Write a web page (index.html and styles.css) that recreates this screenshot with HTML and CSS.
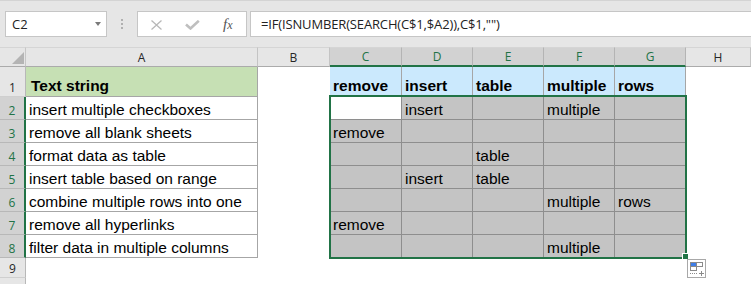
FILE: index.html
```html
<!DOCTYPE html>
<html>
<head>
<meta charset="utf-8">
<link rel="stylesheet" href="styles.css">
</head>
<body>
<div class="toolbar">
  <div class="namebox"><span>C2</span><span class="caret"></span></div>
  <div class="grip"><i></i><i></i><i></i></div>
  <div class="fbtns">
    <svg class="ico-x" width="11" height="10" viewBox="0 0 11 10"><path d="M0.5 0.5 L10.5 9.5 M10.5 0.5 L0.5 9.5" stroke="#b8b8b8" stroke-width="1.3" fill="none"/></svg>
    <svg class="ico-ok" width="15" height="10" viewBox="0 0 15 10"><polyline points="1,4.5 5.5,8.5 13.8,0.8" stroke="#bfbfbf" stroke-width="2.6" fill="none"/></svg>
    <span class="fx"><span class="f">f</span><span class="x">x</span></span>
  </div>
  <div class="formula">=IF(ISNUMBER(SEARCH(C$1,$A2)),C$1,"")</div>
</div>
<div class="sheet">
  <div class="corner"><span class="tri"></span></div>
  <div class="ch">A</div><div class="ch">B</div><div class="ch sel">C</div><div class="ch sel">D</div><div class="ch sel">E</div><div class="ch sel">F</div><div class="ch sel">G</div><div class="ch">H</div>

  <div class="rh">1</div>
  <div class="c a a1">Text string</div><div class="c b"></div>
  <div class="c hd">remove</div><div class="c hd">insert</div><div class="c hd">table</div><div class="c hd">multiple</div><div class="c hd">rows</div><div class="c h"></div>

  <div class="rh sel">2</div>
  <div class="c a">insert multiple checkboxes</div><div class="c b"></div>
  <div class="c g w"></div><div class="c g">insert</div><div class="c g"></div><div class="c g">multiple</div><div class="c g"></div><div class="c h"></div>

  <div class="rh sel">3</div>
  <div class="c a">remove all blank sheets</div><div class="c b"></div>
  <div class="c g">remove</div><div class="c g"></div><div class="c g"></div><div class="c g"></div><div class="c g"></div><div class="c h"></div>

  <div class="rh sel">4</div>
  <div class="c a">format data as table</div><div class="c b"></div>
  <div class="c g"></div><div class="c g"></div><div class="c g">table</div><div class="c g"></div><div class="c g"></div><div class="c h"></div>

  <div class="rh sel">5</div>
  <div class="c a">insert table based on range</div><div class="c b"></div>
  <div class="c g"></div><div class="c g">insert</div><div class="c g">table</div><div class="c g"></div><div class="c g"></div><div class="c h"></div>

  <div class="rh sel">6</div>
  <div class="c a">combine multiple rows into one</div><div class="c b"></div>
  <div class="c g"></div><div class="c g"></div><div class="c g"></div><div class="c g">multiple</div><div class="c g">rows</div><div class="c h"></div>

  <div class="rh sel">7</div>
  <div class="c a">remove all hyperlinks</div><div class="c b"></div>
  <div class="c g">remove</div><div class="c g"></div><div class="c g"></div><div class="c g"></div><div class="c g"></div><div class="c h"></div>

  <div class="rh sel">8</div>
  <div class="c a">filter data in multiple columns</div><div class="c b"></div>
  <div class="c g"></div><div class="c g"></div><div class="c g"></div><div class="c g">multiple</div><div class="c g"></div><div class="c h"></div>

  <div class="rh">9</div>
  <div class="c"></div><div class="c"></div><div class="c"></div><div class="c"></div><div class="c"></div><div class="c"></div><div class="c"></div><div class="c"></div>

  <div class="rh"></div>
  <div class="c"></div><div class="c"></div><div class="c"></div><div class="c"></div><div class="c"></div><div class="c"></div><div class="c"></div><div class="c"></div>
</div>

<div class="selection"></div>
<div class="handle"></div>
<div class="paste">
  <svg width="17" height="17" viewBox="0 0 17 17">
    <rect x="2.5" y="2.5" width="6" height="4" fill="#3f7ee8" stroke="#8a8a8a" stroke-width="1"/>
    <rect x="8.5" y="2.5" width="6" height="4" fill="#fff" stroke="#8a8a8a" stroke-width="1"/>
    <rect x="2.5" y="6.5" width="6" height="4" fill="none" stroke="#8a8a8a" stroke-width="1"/>
    <rect x="2" y="13" width="1" height="1" fill="#8a8a8a"/>
    <rect x="4" y="13" width="1" height="1" fill="#8a8a8a"/>
    <rect x="6" y="13" width="1" height="1" fill="#8a8a8a"/>
    <rect x="8" y="13" width="1" height="1" fill="#8a8a8a"/>
    <path d="M11 13.5 H16 M13.5 11 V16" stroke="#8a8a8a" stroke-width="1" fill="none"/>
  </svg>
</div>
</body>
</html>
```

FILE: styles.css
```css
* { box-sizing: border-box; }

body {
  margin: 0;
  width: 751px;
  height: 284px;
  overflow: hidden;
  background: #fff;
  position: relative;
  font-family: "Liberation Sans", Arial, sans-serif;
}

/* ---------- formula toolbar ---------- */
.toolbar {
  height: 47px;
  background: #e6e6e6;
  border-top: 1px solid #d4d4d4;
  padding-top: 10px;
  display: flex;
  align-items: flex-start;
}

.namebox {
  margin-left: 5px;
  width: 102px;
  height: 26px;
  background: #fff;
  border: 1px solid #c6c6c6;
  display: flex;
  align-items: center;
  padding-left: 6px;
  font-family: "Open Sans", "Noto Sans", sans-serif;
  font-size: 13px;
  color: #222;
}

.caret {
  margin-left: auto;
  margin-right: 5px;
  width: 0;
  height: 0;
  border-left: 3.5px solid transparent;
  border-right: 3.5px solid transparent;
  border-top: 4px solid #7a7a7a;
}

.grip {
  width: 30px;
  height: 26px;
  display: flex;
  flex-direction: column;
  align-items: center;
  justify-content: center;
  gap: 2px;
}
.grip i {
  display: block;
  width: 2px;
  height: 2px;
  background: #b0b0b0;
}

.fbtns {
  width: 110px;
  height: 26px;
  background: #fff;
  border: 1px solid #c6c6c6;
  display: flex;
  align-items: center;
  padding-left: 13px;
}
.ico-x { display: block; margin-top: 1px; }
.ico-ok { display: block; margin-left: 23px; margin-top: 1px; }
.fx {
  margin-left: 23px;
  font-family: "Liberation Serif", "Times New Roman", serif;
  font-style: italic;
  color: #555;
  line-height: 1;
  margin-top: -1px;
}
.fx .f { font-size: 15px; }
.fx .x { font-size: 12px; }

.formula {
  margin-left: 3px;
  flex: 1;
  height: 26px;
  background: #fff;
  border: 1px solid #c6c6c6;
  border-right: none;
  padding-left: 10px;
  display: flex;
  align-items: center;
  white-space: nowrap;
  font-family: "Open Sans", "Noto Sans", sans-serif;
  font-size: 13px;
  letter-spacing: -0.15px;
  color: #222;
}

/* ---------- sheet grid ---------- */
.sheet {
  display: grid;
  grid-template-columns: 26px 232px 72px 72px 71px 71px 71px 71px 65px;
  grid-template-rows: 20px 30px repeat(7, 23px) 20px 20px;
}

.corner {
  background: #e6e6e6;
  border-top: 1px solid #d5d5d5;
  border-right: 1px solid #c6c6c6;
  border-bottom: 1px solid #ababab;
  display: flex;
  justify-content: flex-end;
  align-items: flex-end;
  padding: 0 1px 2px 0;
}
.tri {
  width: 0;
  height: 0;
  border-left: 12px solid transparent;
  border-bottom: 12px solid #b4b4b4;
}

.ch {
  background: #e6e6e6;
  border-top: 1px solid #d5d5d5;
  border-right: 1px solid #c4c4c4;
  border-bottom: 1px solid #ababab;
  display: flex;
  align-items: center;
  justify-content: center;
  font-family: "Open Sans", "Noto Sans", sans-serif;
  font-size: 12px;
  color: #262626;
}
.ch.sel {
  background: #d2d2d2;
  color: #217346;
  border-right-color: #b4b4b4;
  border-bottom: 2px solid #217346;
}

.rh {
  background: #e6e6e6;
  border-right: 1px solid #b8b8b8;
  border-bottom: 1px solid #cfcfcf;
  display: flex;
  align-items: flex-end;
  justify-content: center;
  font-family: "Open Sans", "Noto Sans", sans-serif;
  font-size: 12px;
  color: #262626;
}
.rh.sel {
  background: #d2d2d2;
  color: #217346;
  border-right: 2px solid #217346;
  border-bottom-color: #b8b8b8;
}

.c {
  display: flex;
  align-items: flex-end;
  padding: 0 3px;
  white-space: nowrap;
  font-size: 15.5px;
  color: #000;
}

.a {
  border-right: 1px solid #a6a6a6;
  border-bottom: 1px solid #a6a6a6;
}
.a1 {
  background: #c6e0b4;
  font-weight: bold;
  padding-left: 5px;
  padding-bottom: 1px;
}
.hd {
  background: #cbe9fd;
  font-weight: bold;
  border-right: 1px solid #a6a6a6;
  border-bottom: 1px solid #a6a6a6;
  padding-bottom: 1px;
}
.g {
  background: #c4c4c4;
  border-right: 1px solid #8e8e8e;
  border-bottom: 1px solid #8e8e8e;
}
.g.w { background: #fff; }

/* ---------- overlays ---------- */
.selection {
  position: absolute;
  left: 329px;
  top: 95px;
  width: 358px;
  height: 164px;
  border: 2px solid #217346;
  pointer-events: none;
}
.handle {
  position: absolute;
  left: 682px;
  top: 253px;
  width: 7px;
  height: 7px;
  background: #217346;
  border: 1px solid #fff;
}
.paste {
  position: absolute;
  left: 687px;
  top: 259px;
  width: 19px;
  height: 19px;
  border: 1px solid #a8a8a8;
  background: #fff;
}
.paste svg { display: block; }
```
